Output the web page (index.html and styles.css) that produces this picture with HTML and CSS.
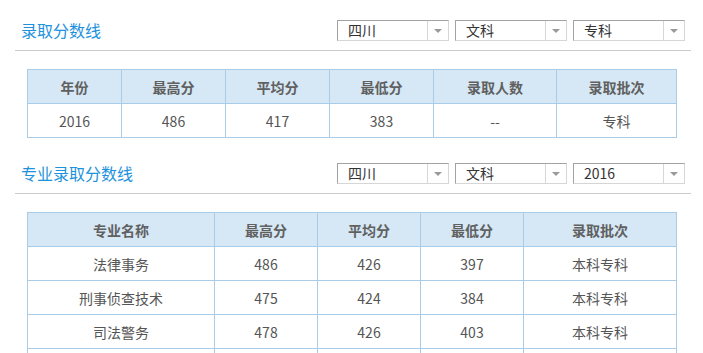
FILE: index.html
```html
<!DOCTYPE html>
<html lang="zh">
<head>
<meta charset="utf-8">
<link rel="stylesheet" href="styles.css">
</head>
<body>
<div class="section">
  <div class="head">
    <h2 class="title">录取分数线</h2>
    <div class="filters">
      <div class="select"><span class="val">四川</span><span class="arrow"></span></div>
      <div class="select"><span class="val">文科</span><span class="arrow"></span></div>
      <div class="select"><span class="val">专科</span><span class="arrow"></span></div>
    </div>
  </div>
  <table class="grid t1">
    <tr><th class="c1">年份</th><th class="c2">最高分</th><th class="c3">平均分</th><th class="c4">最低分</th><th class="c5">录取人数</th><th>录取批次</th></tr>
    <tr><td>2016</td><td>486</td><td>417</td><td>383</td><td>--</td><td>专科</td></tr>
  </table>
</div>
<div class="section">
  <div class="head">
    <h2 class="title">专业录取分数线</h2>
    <div class="filters">
      <div class="select"><span class="val">四川</span><span class="arrow"></span></div>
      <div class="select"><span class="val">文科</span><span class="arrow"></span></div>
      <div class="select"><span class="val">2016</span><span class="arrow"></span></div>
    </div>
  </div>
  <table class="grid t2">
    <tr><th class="m1">专业名称</th><th class="m2">最高分</th><th class="m3">平均分</th><th class="m4">最低分</th><th>录取批次</th></tr>
    <tr><td>法律事务</td><td>486</td><td>426</td><td>397</td><td>本科专科</td></tr>
    <tr><td>刑事侦查技术</td><td>475</td><td>424</td><td>384</td><td>本科专科</td></tr>
    <tr><td>司法警务</td><td>478</td><td>426</td><td>403</td><td>本科专科</td></tr>
    <tr><td></td><td></td><td></td><td></td><td></td></tr>
  </table>
</div>
</body>
</html>
```
FILE: styles.css
```css
html, body {
  margin: 0;
  padding: 0;
  background: #fff;
}
body {
  font-family: "Microsoft YaHei", "Noto Sans CJK SC", "Noto Sans", sans-serif;
  font-size: 14px;
  color: #555;
}
.section {
  width: 676px;
  margin-left: 15px;
}
.head {
  display: flex;
  justify-content: space-between;
  align-items: center;
  padding: 20px 6px 9px 6px;
  border-bottom: 1px solid #cccccc;
}
.section + .section .head {
  padding-top: 25px;
}
.title {
  margin: 0;
  font-size: 16px;
  font-weight: normal;
  color: #1e92dc;
  line-height: 21px;
}
.filters {
  display: flex;
  gap: 6px;
}
.select {
  box-sizing: border-box;
  width: 112px;
  height: 21px;
  display: flex;
  border-style: solid;
  border-width: 1px;
  border-color: #a3a3a3 #d6d6d6 #d6d6d6 #a3a3a3;
  background: #fff;
}
.val {
  flex: 1;
  padding-left: 10px;
  font-size: 14px;
  line-height: 19px;
  color: #333;
}
.arrow {
  width: 20px;
  border-left: 1px solid #d6d6d6;
  display: flex;
  align-items: center;
  justify-content: center;
}
.arrow::after {
  content: "";
  width: 0;
  height: 0;
  border-left: 4px solid transparent;
  border-right: 4px solid transparent;
  border-top: 4px solid #9a9a9a;
  margin-top: 1px;
}
.grid {
  margin: 18px 0 0 12px;
  width: 650px;
  border-collapse: collapse;
  table-layout: fixed;
}
.grid th, .grid td {
  border: 1px solid #a9cde9;
  height: 33px;
  padding: 0;
  text-align: center;
  font-size: 14px;
  color: #555;
}
.grid th {
  background: #d6e8f6;
  font-weight: bold;
  color: #606060;
}
.c1 { width: 93px; }
.c2 { width: 103px; }
.c3 { width: 103px; }
.c4 { width: 103px; }
.c5 { width: 122px; }
.m1 { width: 186px; }
.m2 { width: 102px; }
.m3 { width: 102px; }
.m4 { width: 102px; }
```
